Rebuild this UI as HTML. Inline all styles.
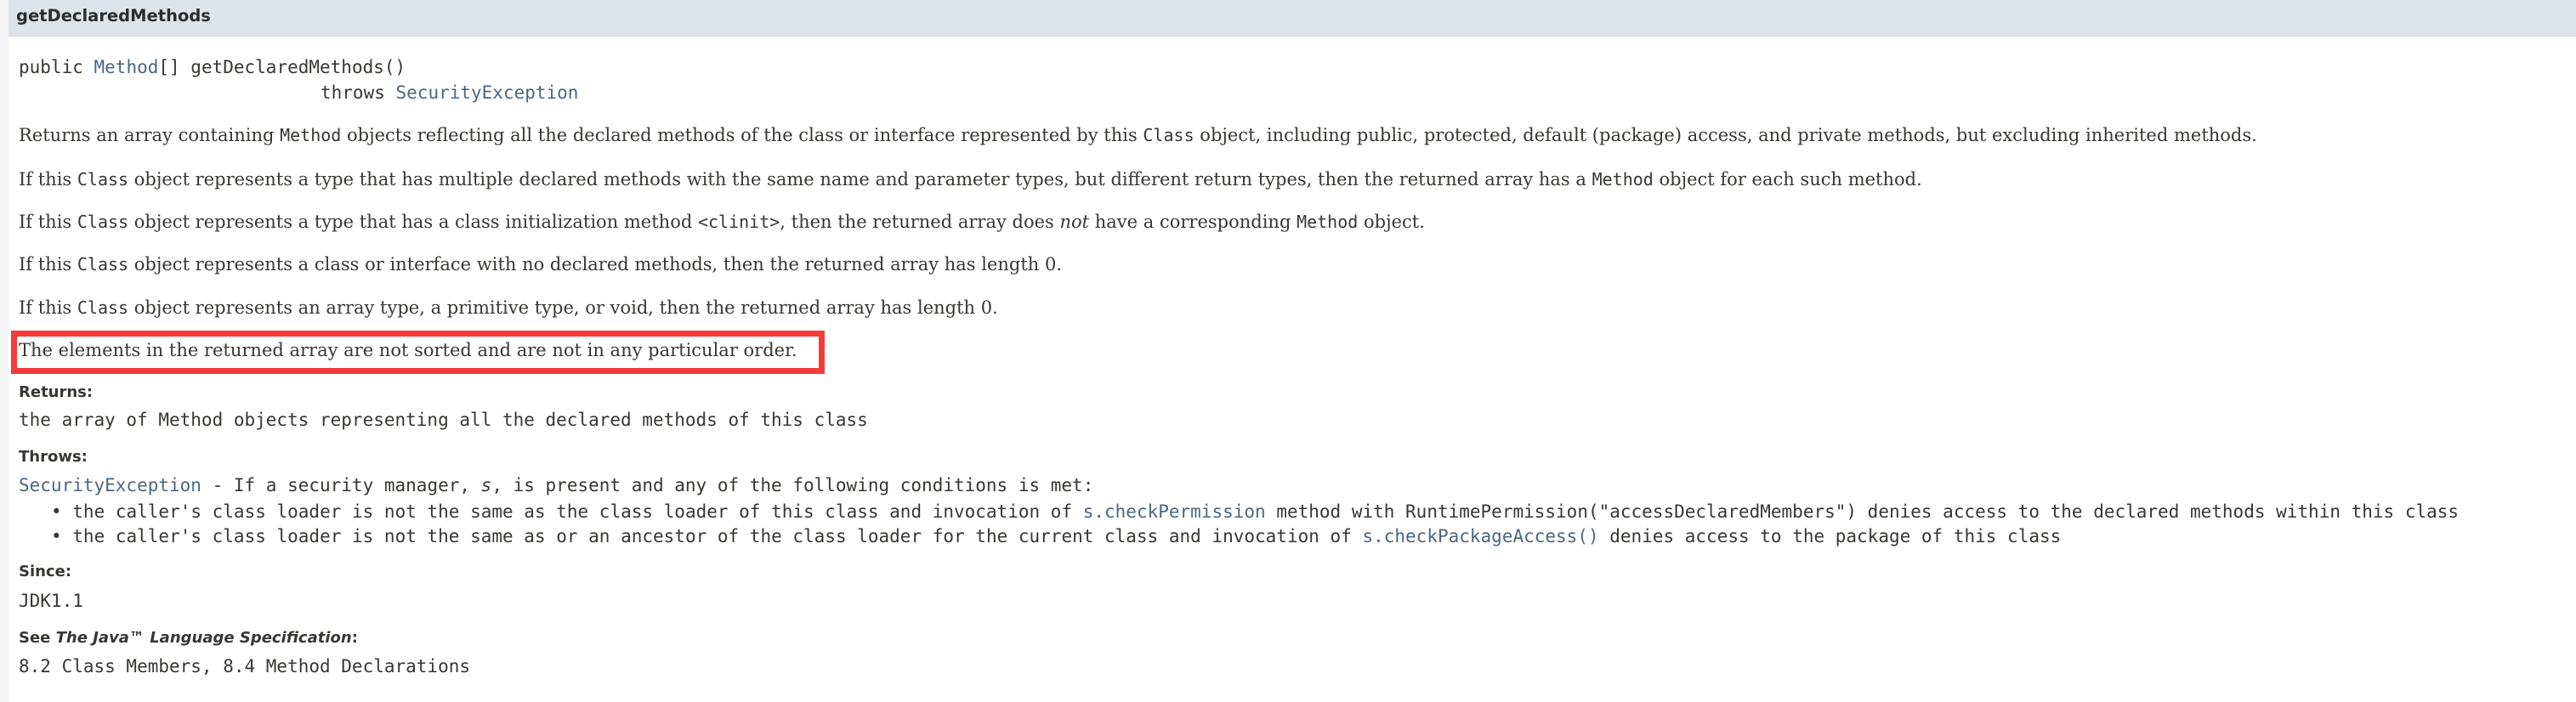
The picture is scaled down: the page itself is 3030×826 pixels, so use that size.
<!DOCTYPE html>
<html><head><meta charset="utf-8"><style>
html,body{margin:0;padding:0;background:#fff;width:3030px;height:826px;overflow:hidden;position:relative;color:#353833}
.strip{position:absolute;left:0;top:0;width:10px;height:826px;background:#f4f4f4}
.hdr{position:absolute;left:10px;top:0;right:0;height:42px;background:#dee3e9;border-bottom:1px solid #d0d4da}
.l{position:absolute;left:22px;white-space:nowrap;line-height:30px;height:30px}
.serif{font-family:"DejaVu Serif","Liberation Serif",serif;font-size:21px}
.mono{font-family:"DejaVu Sans Mono","Liberation Mono",monospace;font-size:21px}
.serif code{font-family:"DejaVu Sans Mono","Liberation Mono",monospace;font-size:20px}
.lab{font-family:"DejaVu Sans","Liberation Sans",sans-serif;font-weight:bold;font-size:18px}
a{color:#4a6782;text-decoration:none}
.box{position:absolute;left:13px;top:389px;width:943px;height:37px;border:7px solid #f53a3a}
</style></head><body>
<div class="strip"></div>
<div class="hdr"></div>
<div class="l" style="left:19px;top:4px;font-family:'DejaVu Sans','Liberation Sans',sans-serif;font-weight:bold;font-size:19.5px;color:#2c2c2c">getDeclaredMethods</div>
<div class="l mono" style="top:64px">public <a>Method</a>[] getDeclaredMethods()</div>
<div class="l mono" style="left:377px;top:94px">throws <a>SecurityException</a></div>
<div class="l serif" style="top:144px">Returns an array containing <code>Method</code> objects reflecting all the declared methods of the class or interface represented by this <code>Class</code> object, including public, protected, default (package) access, and private methods, but excluding inherited methods.</div>
<div class="l serif" style="top:196px">If this <code>Class</code> object represents a type that has multiple declared methods with the same name and parameter types, but different return types, then the returned array has a <code>Method</code> object for each such method.</div>
<div class="l serif" style="top:246px">If this <code>Class</code> object represents a type that has a class initialization method <code>&lt;clinit&gt;</code>, then the returned array does <i>not</i> have a corresponding <code>Method</code> object.</div>
<div class="l serif" style="top:296px">If this <code>Class</code> object represents a class or interface with no declared methods, then the returned array has length 0.</div>
<div class="l serif" style="top:347px">If this <code>Class</code> object represents an array type, a primitive type, or void, then the returned array has length 0.</div>
<div class="box"></div>
<div class="l serif" style="top:397px">The elements in the returned array are not sorted and are not in any particular order.</div>
<div class="l lab" style="top:447px">Returns:</div>
<div class="l mono" style="top:479px">the array of Method objects representing all the declared methods of this class</div>
<div class="l lab" style="top:523px">Throws:</div>
<div class="l mono" style="top:556px"><a>SecurityException</a> - If a security manager, <i>s</i>, is present and any of the following conditions is met:</div>
<div class="l mono" style="left:60px;top:587px">&bull; the caller's class loader is not the same as the class loader of this class and invocation of <a>s.checkPermission</a> method with RuntimePermission("accessDeclaredMembers") denies access to the declared methods within this class</div>
<div class="l mono" style="left:60px;top:616px">&bull; the caller's class loader is not the same as or an ancestor of the class loader for the current class and invocation of <a>s.checkPackageAccess()</a> denies access to the package of this class</div>
<div class="l lab" style="top:658px">Since:</div>
<div class="l mono" style="top:692px">JDK1.1</div>
<div class="l lab" style="top:736px">See <i>The Java™ Language Specification</i>:</div>
<div class="l mono" style="top:769px">8.2 Class Members, 8.4 Method Declarations</div>
</body></html>
